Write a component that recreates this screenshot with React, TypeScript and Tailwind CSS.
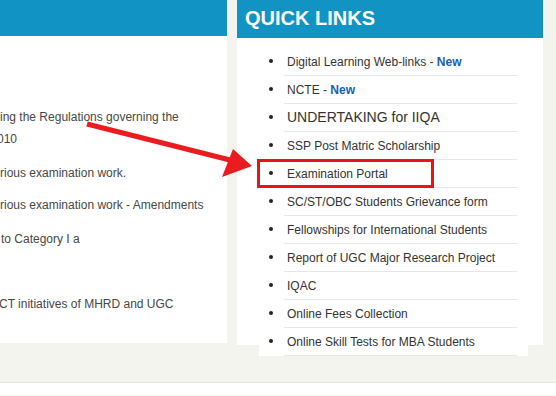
import React from "react";

type LinkItem = { label: string; isNew?: boolean; big?: boolean };

const links: LinkItem[] = [
    { label: "Digital Learning Web-links - ", isNew: true },
    { label: "NCTE - ", isNew: true },
    { label: "UNDERTAKING for IIQA", big: true },
    { label: "SSP Post Matric Scholarship" },
    { label: "Examination Portal" },
    { label: "SC/ST/OBC Students Grievance form" },
    { label: "Fellowships for International Students" },
    { label: "Report of UGC Major Research Project" },
    { label: "IQAC" },
    { label: "Online Fees Collection" },
    { label: "Online Skill Tests for MBA Students" },
];

export default function App() {
    return (
        <div className="relative w-[556px] h-[396px] overflow-hidden bg-[#f4f4ee] font-['Liberation_Sans',Arial,sans-serif]">
            <div className="flex items-start h-[383px] border-b border-[#e4e4de]">
                {/* Left: notifications panel (cut off) */}
                <div className="w-[227px] h-[343px] bg-white overflow-hidden shrink-0">
                    <div className="h-[36px] bg-[#1193c4]" />
                    <div className="text-[12px] leading-[22px] text-[#474747] whitespace-nowrap">
                        <p className="mt-[70px]">ing the Regulations governing the</p>
                        <p className="-ml-[3px]">010</p>
                        <p className="mt-[12px]">rious examination work.</p>
                        <p className="mt-[10px]">rious examination work - Amendments</p>
                        <p className="mt-[12px] ml-px">to Category I a</p>
                        <p className="mt-[43px] -ml-px">CT initiatives of MHRD and UGC</p>
                    </div>
                </div>

                {/* Right: quick links */}
                <div className="ml-[10px] w-[306px] h-[345px] bg-white shrink-0">
                    <div className="h-[38px] bg-[#1193c4] pl-2 text-[20px] font-bold leading-[36px] text-white">
                        QUICK LINKS
                    </div>
                    <ul className="relative ml-[22px] mt-[10px] w-[269px] bg-white pl-[25px] pr-[11px]">
                        {links.map((l) => (
                            <li
                                key={l.label}
                                className="relative h-[28px] border-b border-[#e8e8e8] pl-[3px] leading-[25px] text-[#333] whitespace-nowrap"
                            >
                                <span className="absolute -left-[15px] top-[11px] h-[4px] w-[4px] rounded-full bg-[#222]" />
                                <span className={l.big ? "text-[14px]" : "text-[12px]"}>{l.label}</span>
                                {l.isNew && <span className="text-[12px] font-bold text-[#1560ad]">New</span>}
                            </li>
                        ))}
                    </ul>
                </div>
            </div>
            <div className="h-[12px] bg-white" />

            {/* annotation: red box around Examination Portal */}
            <div className="absolute left-[257px] top-[159px] h-[29px] w-[177px] border-[3px] border-[#e8141c]" />

            {/* annotation: red arrow */}
            <svg className="absolute left-0 top-0" width="556" height="396" viewBox="0 0 556 396">
                <line x1="87" y1="124" x2="230" y2="160" stroke="#ec1b1f" strokeWidth="5" />
                <polygon points="252,166 233,149 222,177" fill="#ec1b1f" />
            </svg>
        </div>
    );
}
